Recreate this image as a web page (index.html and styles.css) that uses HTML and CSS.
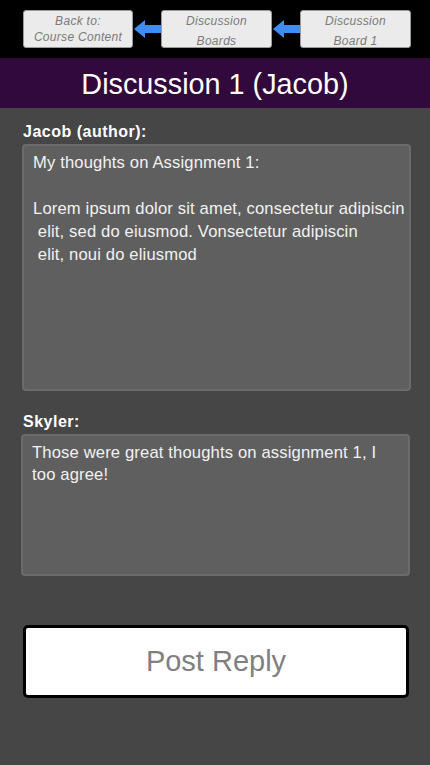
FILE: index.html
```html
<!DOCTYPE html>
<html>
<head>
<meta charset="utf-8">
<link rel="stylesheet" href="styles.css">
</head>
<body>
<nav class="topbar">
  <div class="crumb crumb-tight">Back to:<br>Course Content</div>
  <svg class="arrow" width="28" height="18" viewBox="0 0 28 18"><polygon points="1,9 12,0 12,5 28,5 28,13 12,13 12,18" fill="#3f8cf2"/></svg>
  <div class="crumb">Discussion<br>Boards</div>
  <svg class="arrow" width="28" height="18" viewBox="0 0 28 18"><polygon points="1,9 12,0 12,5 28,5 28,13 12,13 12,18" fill="#3f8cf2"/></svg>
  <div class="crumb">Discussion<br>Board 1</div>
</nav>
<header class="title">Discussion 1 (Jacob)</header>
<main class="content">
  <div class="label label-first">Jacob (author):</div>
  <div class="post post-main">
    <p>My thoughts on Assignment 1:</p>
    <p class="para">Lorem ipsum dolor sit amet, consectetur adipiscin<br>&nbsp;elit, sed do eiusmod. Vonsectetur adipiscin<br>&nbsp;elit, noui do eliusmod</p>
  </div>
  <div class="label label-second">Skyler:</div>
  <div class="post post-reply">
    <p>Those were great thoughts on assignment 1, I<br>too agree!</p>
  </div>
  <button class="reply">Post Reply</button>
</main>
</body>
</html>
```
FILE: styles.css
```css
html, body {
  margin: 0;
  padding: 0;
}
body {
  background: #464646;
  font-family: "Liberation Sans", Arial, sans-serif;
  width: 430px;
  min-height: 765px;
}
.topbar {
  background: #000;
  height: 58px;
  display: flex;
  align-items: center;
  padding-left: 23px;
  box-sizing: border-box;
}
.crumb {
  width: 111px;
  height: 38px;
  box-sizing: border-box;
  background: #ebebeb;
  border: 1px solid #9a9a9a;
  border-radius: 3px;
  color: #7a7a7a;
  font-style: italic;
  font-size: 12px;
  letter-spacing: 0.3px;
  line-height: 20px;
  text-align: center;
  padding-top: 0px;
}
.crumb-tight {
  width: 110px;
  line-height: 16px;
  padding-top: 2px;
}
.arrow {
  display: block;
  flex: none;
}
.title {
  background: #32093c;
  height: 50px;
  color: #fff;
  font-size: 28.8px;
  line-height: 52px;
  text-align: center;
}
.content {
  padding: 0 19px 0 22px;
  display: flex;
  flex-direction: column;
}
.label {
  color: #fff;
  font-weight: bold;
  font-size: 16px;
  letter-spacing: 0.5px;
  line-height: 18px;
  margin-bottom: 3px;
  padding-left: 1px;
}
.label-first {
  margin-top: 15px;
}
.label-second {
  margin-top: 21.5px;
}
.post {
  background: #5f5f5f;
  border: 2px solid #6b6b6b;
  border-radius: 4px;
  box-sizing: border-box;
  color: #f2f2f2;
  font-size: 16.6px;
  letter-spacing: 0.15px;
  line-height: 22.9px;
  padding: 6px 9px;
  white-space: nowrap;
}
.post p {
  margin: 0;
}
.post .para {
  margin-top: 22.9px;
}
.post-main {
  height: 247px;
}
.post-reply {
  height: 142px;
  margin-left: -1px;
  margin-right: 1px;
}
.reply {
  margin-top: 49px;
  margin-left: 1px;
  margin-right: 2px;
  height: 73px;
  background: #fff;
  border: 3px solid #000;
  border-radius: 5px;
  color: #808080;
  font-family: "Liberation Sans", Arial, sans-serif;
  font-size: 29px;
  padding: 0;
}
```
